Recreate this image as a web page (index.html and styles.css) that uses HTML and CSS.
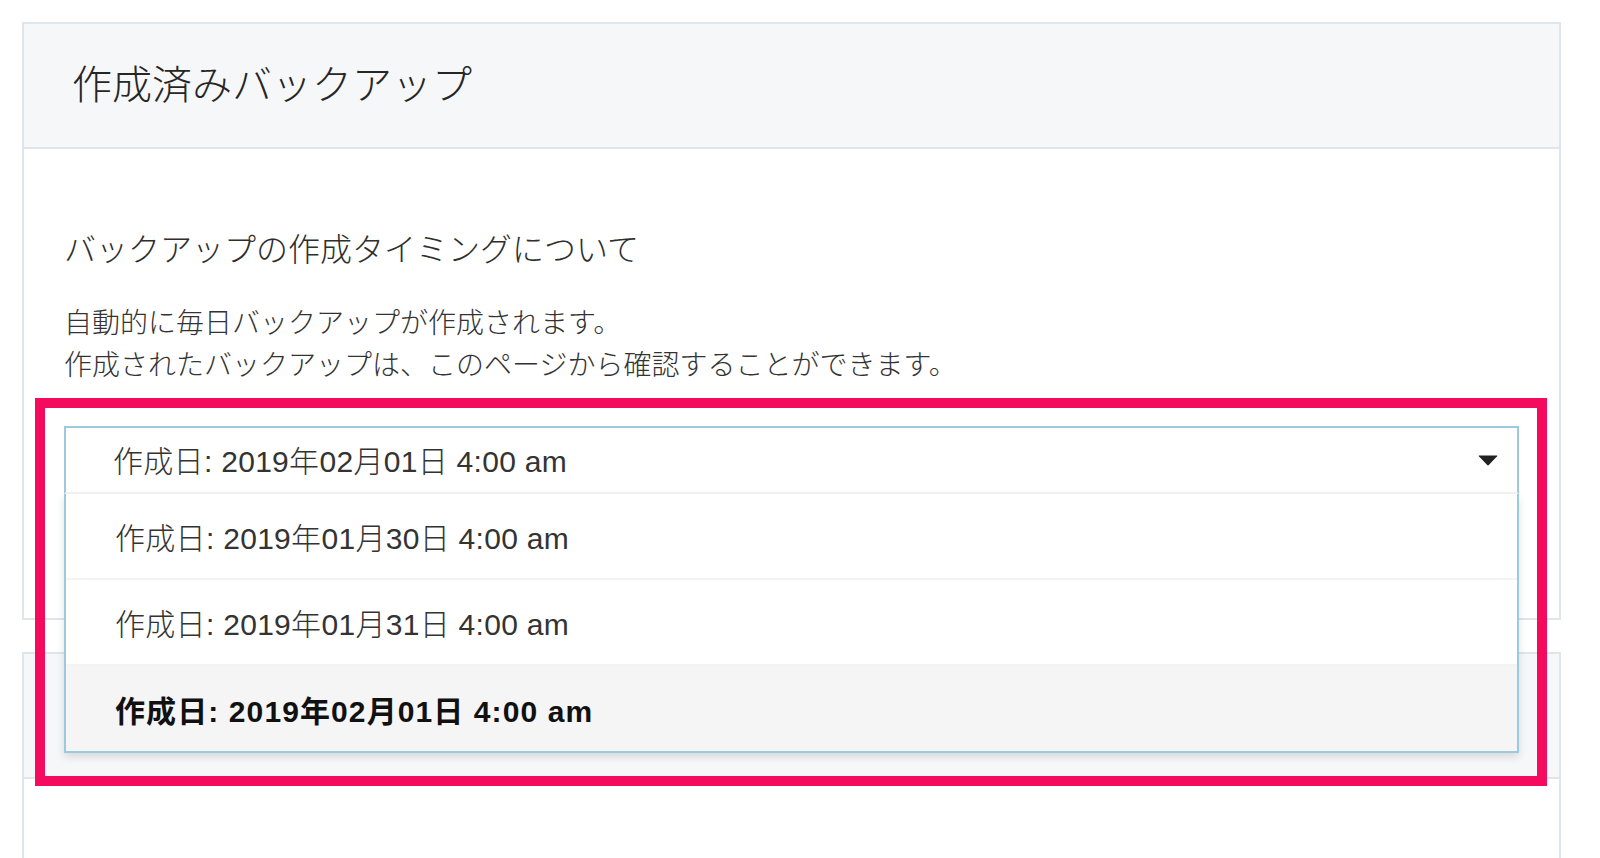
FILE: index.html
```html
<!DOCTYPE html>
<html lang="ja">
<head>
<meta charset="utf-8">
<title>作成済みバックアップ</title>
<link rel="stylesheet" href="styles.css">
</head>
<body>
<div class="page">
  <section class="card">
    <header class="card-header">
      <h1 class="card-title">作成済みバックアップ</h1>
    </header>
    <div class="card-body">
      <h2 class="sub-title">バックアップの作成タイミングについて</h2>
      <p class="desc">自動的に毎日バックアップが作成されます。<br>作成されたバックアップは、このページから確認することができます。</p>
      <div class="select">
        <div class="select-value">
          <span class="select-text">作成日: 2019年02月01日 4:00 am</span>
          <svg class="caret" width="20" height="11" viewBox="0 0 20 11"><path d="M1.2 0.5 H18.8 Q19.8 0.5 19.1 1.3 L10.8 10 Q10 10.8 9.2 10 L0.9 1.3 Q0.2 0.5 1.2 0.5 Z" fill="#222"/></svg>
        </div>
        <ul class="menu">
          <li class="option">作成日: 2019年01月30日 4:00 am</li>
          <li class="option">作成日: 2019年01月31日 4:00 am</li>
          <li class="option option-active">作成日: 2019年02月01日 4:00 am</li>
        </ul>
      </div>
    </div>
  </section>
  <section class="card card-second">
    <header class="card-header"></header>
    <div class="card-body card-body-empty"></div>
  </section>
  <div class="highlight"></div>
</div>
</body>
</html>
```
FILE: styles.css
```css
* { box-sizing: border-box; }
html, body { margin: 0; padding: 0; background: #fff; }
body {
  font-family: "Noto Sans CJK JP", "Noto Sans", sans-serif;
  color: #333;
  overflow: hidden;
  height: 858px;
}
.page {
  position: relative;
  padding: 22px 39px 0 22px;
}
.card {
  border: 2px solid #dfe5e9;
  background: #fff;
}
.card-header {
  height: 125px;
  background: #f6f7f9;
  border-bottom: 2px solid #dfe5e9;
  display: flex;
  align-items: center;
  padding-left: 48px;
  padding-bottom: 7px;
}
.card-title {
  margin: 0;
  font-size: 40px;
  font-weight: 300;
  color: #262626;
  line-height: 1;
}
.card-body {
  padding: 76px 40px 124px 40px;
}
.sub-title {
  margin: 0;
  font-size: 32px;
  font-weight: 300;
  line-height: 48px;
  color: #2e2e2e;
  position: relative;
  top: -2px;
}
.desc {
  margin: 27px 0 0 0;
  font-size: 28px;
  font-weight: 300;
  line-height: 42px;
  color: #333;
}
.select {
  position: relative;
  margin-top: 42px;
  font-size: 30px;
  font-weight: 300;
  letter-spacing: 0.3px;
  font-family: "Liberation Sans", "Noto Sans CJK JP", sans-serif;
  z-index: 2;
}
.select-value {
  height: 68px;
  border: 2px solid #9ccadc;
  border-bottom: 2px solid #f3f3f3;
  display: flex;
  align-items: center;
  justify-content: space-between;
  padding: 0 19px 3px 47px;
  background: #fff;
}
.select-text { color: #333; }
.caret { display: block; margin-top: 3px; }
.menu {
  position: absolute;
  top: 100%;
  left: 0;
  right: 0;
  margin: 0;
  padding: 0;
  list-style: none;
  border: 2px solid #9ccadc;
  border-top: none;
  background: #fff;
  box-shadow: 0 4px 8px rgba(0, 0, 0, 0.12);
}
.option {
  height: 86px;
  display: flex;
  align-items: center;
  padding-left: 49px;
  border-bottom: 2px solid #f3f3f3;
  color: #333;
}
.option:last-child { border-bottom: none; height: 85px; }
.option-active {
  background: #f5f5f5;
  font-weight: 700;
  letter-spacing: 1.1px;
  color: #111;
}
.card-second {
  margin-top: 32px;
  border-bottom: none;
}
.card-body-empty {
  height: 120px;
  padding: 0;
}
.highlight {
  position: absolute;
  left: 35px;
  top: 398px;
  width: 1512px;
  height: 388px;
  border: 10px solid #f50b5d;
  z-index: 3;
  pointer-events: none;
}
```
